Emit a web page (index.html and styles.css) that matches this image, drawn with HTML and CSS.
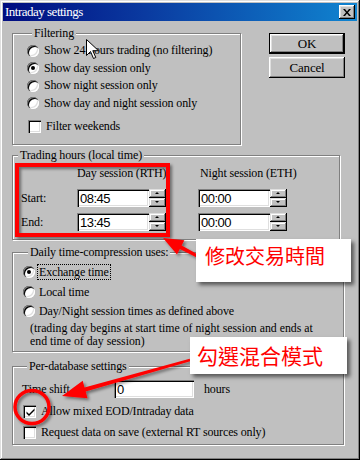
FILE: index.html
```html
<!DOCTYPE html>
<html lang="en">
<head>
    <meta charset="UTF-8">
    <title>Intraday settings</title>
    <link rel="stylesheet" href="styles.css">
</head>
<body>
    <div class="window">
        <div class="titlebar">
            <span class="title">Intraday settings</span>
            <span class="close">
                <svg width="8" height="7" viewBox="0 0 8 7"><path d="M0 0h2l2 2.5L6 0h2L5 3.5 8 7H6L4 4.5 2 7H0l3-3.5z" fill="#000"/></svg>
            </span>
        </div>

        <div class="content">
            <div class="top-row">
                <div class="group filtering">
                    <div class="group-title">Filtering</div>
                    <div class="options">
                        <div class="opt"><span class="radio"></span>Show 24 hours trading (no filtering)</div>
                        <div class="opt"><span class="radio on"></span>Show day session only</div>
                        <div class="opt"><span class="radio"></span>Show night session only</div>
                        <div class="opt"><span class="radio"></span>Show day and night session only</div>
                    </div>
                    <div class="opt check-row"><span class="check"></span>Filter weekends</div>
                </div>
                <div class="buttons">
                    <div class="btn default">OK</div>
                    <div class="btn">Cancel</div>
                </div>
            </div>

            <div class="group trading">
                <div class="group-title">Trading hours (local time)</div>
                <div class="hours-grid">
                    <span></span>
                    <span class="col-head">Day session (RTH)</span>
                    <span class="col-head night">Night session (ETH)</span>

                    <span class="row-label">Start:</span>
                    <div class="spin"><span class="field">08:45</span><span class="spin-btns"><span class="up"></span><span class="down"></span></span></div>
                    <div class="spin"><span class="field">00:00</span><span class="spin-btns"><span class="up"></span><span class="down"></span></span></div>

                    <span class="row-label">End:</span>
                    <div class="spin"><span class="field">13:45</span><span class="spin-btns"><span class="up"></span><span class="down"></span></span></div>
                    <div class="spin"><span class="field">00:00</span><span class="spin-btns"><span class="up"></span><span class="down"></span></span></div>
                </div>
            </div>

            <div class="group daily">
                <div class="group-title">Daily time-compression uses:</div>
                <div class="options">
                    <div class="opt"><span class="radio on"></span><span class="focus">Exchange time</span></div>
                    <div class="opt"><span class="radio"></span><span class="nofocus">Local time</span></div>
                    <div class="opt"><span class="radio"></span><span class="nofocus">Day/Night session times as defined above</span></div>
                </div>
                <p class="note">(trading day begins at start time of night session and ends at<br>end time of day session)</p>
            </div>

            <div class="group perdb">
                <div class="group-title">Per-database settings</div>
                <div class="shift-row">
                    <span class="shift-label">Time shift</span>
                    <span class="field shift-field">0</span>
                    <span class="unit">hours</span>
                </div>
                <div class="opt db-check"><span class="check on"><svg width="9" height="9" viewBox="0 0 9 9"><path d="M0.5 4.5l2.5 2.5 5.5-5.5v2L3 9 0.5 6.5z" fill="#000"/></svg></span>Allow mixed EOD/Intraday data</div>
                <div class="opt db-check"><span class="check"></span>Request data on save (external RT sources only)</div>
            </div>
        </div>

        <!-- annotations drawn over the dialog -->
        <svg class="marks" width="360" height="460" viewBox="0 0 360 460">
            <defs>
                <filter id="shade" x="-20%" y="-20%" width="150%" height="150%">
                    <feDropShadow dx="2" dy="2" stdDeviation="1.5" flood-color="#000" flood-opacity="0.45"/>
                </filter>
            </defs>
            <g filter="url(#shade)" fill="#ff0000">
                <rect x="17" y="165" width="151" height="70" fill="none" stroke="#ff0000" stroke-width="4"/>
                <polygon points="163,238 184.4,240.2 181.6,245.5 205.7,258.7 204.3,261.3 179.8,249.1 177,254.4"/>
                <polygon points="62,396 82.7,380.8 84.5,387.4 189.7,358.8 190.3,361.2 85.7,391.6 87.5,398.2"/>
                <ellipse cx="32" cy="407" rx="17" ry="16.5" fill="none" stroke="#ff0000" stroke-width="3.5"/>
            </g>
        </svg>
        <div class="callout first">修改交易時間</div>
        <div class="callout second">勾選混合模式</div>

        <svg class="pointer" width="13" height="21" viewBox="0 0 13 21">
            <path d="M0.5 0.5v16l4-4 3 7 2.3-1-3-6.8h5.7z" fill="#fff" stroke="#000" stroke-width="1"/>
        </svg>
    </div>
</body>
</html>
```

FILE: styles.css
```css
body {
    margin: 0;
    padding: 0;
}
.window {
    position: relative;
    width: 360px;
    height: 460px;
    box-sizing: border-box;
    background: #c0c0c0;
    box-shadow: inset -1px -1px #000, inset 1px 1px #dfdfdf, inset -2px -2px #808080, inset 2px 2px #fff;
    font-family: "Liberation Serif", serif;
    font-size: 12px;
    letter-spacing: -0.15px;
    color: #000;
    overflow: hidden;
}
.titlebar {
    display: flex;
    align-items: center;
    justify-content: space-between;
    margin: 3px 3px 0 3px;
    height: 18px;
    padding: 0 2px 0 2px;
    background: linear-gradient(90deg, #000c80, #0a3aa0 40%, #1084d0);
}
.title {
    color: #fff;
    font-size: 13px;
    letter-spacing: -0.5px;
}
.close {
    display: flex;
    align-items: center;
    justify-content: center;
    width: 16px;
    height: 14px;
    background: #c0c0c0;
    box-shadow: inset -1px -1px #000, inset 1px 1px #fff, inset -2px -2px #808080, inset 2px 2px #dfdfdf;
}
.content {
    padding: 12px 0 0 12px;
}
.top-row {
    display: flex;
    align-items: flex-start;
}

/* group boxes */
.group {
    border: 1px solid #808080;
    box-shadow: inset 1px 1px #fff, 1px 1px #fff;
    box-sizing: border-box;
}
.group-title {
    width: fit-content;
    margin: -8px 0 0 5px;
    padding: 0 2px;
    line-height: 14px;
    height: 14px;
    background: #c0c0c0;
}
.filtering {
    width: 229px;
    height: 112px;
    padding-left: 14px;
}
.filtering .options {
    margin-top: 2px;
}
.opt {
    display: flex;
    align-items: center;
    height: 17.5px;
    white-space: nowrap;
}
.check-row {
    margin-top: 6px;
}
.check-row .check {
    margin-left: 1px;
}
.radio {
    position: relative;
    flex: none;
    width: 12px;
    height: 12px;
    margin-right: 5px;
    border-radius: 50%;
    background: #fff;
    box-shadow: inset 1px 1px #808080, inset 2px 2px #000, inset -1px -1px #fff, inset -2px -2px #dfdfdf;
}
.radio.on::after {
    content: "";
    position: absolute;
    left: 4px;
    top: 4px;
    width: 4px;
    height: 4px;
    border-radius: 50%;
    background: #000;
}
.check {
    display: flex;
    align-items: center;
    justify-content: center;
    flex: none;
    width: 13px;
    height: 13px;
    margin-right: 5px;
    background: #fff;
    box-shadow: inset 1px 1px #808080, inset 2px 2px #000, inset -1px -1px #fff, inset -2px -2px #dfdfdf;
}
.check svg {
    margin: 1px 0 0 1px;
}

/* buttons */
.buttons {
    display: flex;
    flex-direction: column;
    gap: 3px;
    margin-left: 28px;
}
.btn {
    width: 76px;
    height: 21px;
    box-sizing: border-box;
    line-height: 21px;
    text-align: center;
    font-size: 13px;
    box-shadow: inset -1px -1px #000, inset 1px 1px #fff, inset -2px -2px #808080, inset 2px 2px #dfdfdf;
}
.btn.default {
    box-shadow: inset 0 0 0 1px #000, inset -2px -2px #000, inset 2px 2px #fff, inset -3px -3px #808080, inset 3px 3px #dfdfdf;
}

/* trading hours */
.trading {
    width: 328px;
    height: 85px;
    margin-top: 10px;
}
.hours-grid {
    display: grid;
    grid-template-columns: 56px 121px 89px;
    grid-template-rows: 17px 18px 18px;
    row-gap: 6px;
    align-items: center;
    margin: 4px 0 0 8px;
}
.hours-grid .col-head {
    align-self: start;
    line-height: 14px;
    white-space: nowrap;
}
.hours-grid .night {
    padding-left: 2px;
}
.spin {
    display: flex;
    width: 89px;
    height: 18px;
}
.field {
    display: flex;
    align-items: center;
    box-sizing: border-box;
    height: 100%;
    padding: 0 2px 0 3px;
    background: #fff;
    font-family: "Liberation Sans", sans-serif;
    font-size: 13px;
    letter-spacing: -0.5px;
    box-shadow: inset 1px 1px #808080, inset 2px 2px #000, inset -1px -1px #fff, inset -2px -2px #dfdfdf;
}
.spin .field {
    width: 72px;
}
.spin-btns {
    display: flex;
    flex-direction: column;
    width: 17px;
    height: 18px;
    box-shadow: inset 0 -1px #fff;
}
.spin-btns span {
    position: relative;
    flex: 1;
    box-shadow: inset -1px -1px #000, inset 1px 1px #dfdfdf, inset -2px -2px #808080, inset 2px 2px #fff;
    background: #c0c0c0;
}
.spin-btns span::after {
    content: "";
    position: absolute;
    left: 6px;
    top: 3px;
    border-left: 2px solid transparent;
    border-right: 2px solid transparent;
}
.spin-btns .up::after {
    border-bottom: 2px solid #000;
}
.spin-btns .down::after {
    border-top: 2px solid #000;
}

/* daily compression */
.daily {
    width: 332px;
    height: 100px;
    margin-top: 12px;
    padding-left: 10px;
}
.daily .options {
    margin-top: 3.5px;
}
.daily .opt {
    height: 19.5px;
}
.daily .radio {
    margin-right: 2px;
}
.focus, .nofocus {
    padding: 0 1px;
    line-height: 14px;
    border: 1px dotted transparent;
}
.focus {
    border-color: #000;
}
.note {
    margin: 1px 0 0 7px;
    font-size: 11.8px;
    letter-spacing: 0;
    line-height: 12.5px;
}

/* per-database */
.perdb {
    width: 332px;
    height: 79px;
    margin-top: 14px;
    padding-left: 9px;
}
.shift-row {
    display: flex;
    align-items: center;
    height: 20px;
    margin-top: 6px;
}
.shift-label {
    width: 92px;
}
.shift-field {
    width: 80px;
    height: 18px;
}
.unit {
    margin-left: 10px;
}
.db-check {
    height: 21px;
    margin-left: 1px;
}
.perdb .shift-row + .db-check {
    margin-top: 1.5px;
}

/* annotations */
.marks {
    position: absolute;
    left: 0;
    top: 0;
    pointer-events: none;
}
.callout {
    position: absolute;
    box-sizing: border-box;
    background: #fff;
    color: #ff0000;
    font-family: "Noto Sans CJK TC", "Noto Sans CJK SC", sans-serif;
    font-size: 20px;
    letter-spacing: 0;
    box-shadow: 3px 3px 4px rgba(0, 0, 0, 0.55);
}
.callout.first {
    left: 196px;
    top: 239px;
    width: 155px;
    height: 43px;
    padding: 3px 0 0 9px;
    line-height: 28px;
}
.callout.second {
    left: 190px;
    top: 337px;
    width: 157px;
    height: 37px;
    padding: 4px 0 0 7px;
    line-height: 28px;
    font-size: 21px;
}
.pointer {
    position: absolute;
    left: 86px;
    top: 39px;
}
```
